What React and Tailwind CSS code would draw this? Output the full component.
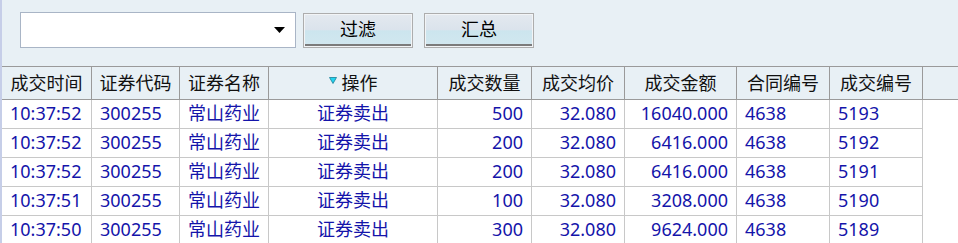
import React from 'react';

const columns = [
  { title: '成交时间', w: 'w-[90px]', align: 'text-left' },
  { title: '证券代码', w: 'w-[88px]', align: 'text-left' },
  { title: '证券名称', w: 'w-[89px]', align: 'text-left' },
  { title: '操作', w: 'w-[169px]', align: 'text-center', sorted: true },
  { title: '成交数量', w: 'w-[94px]', align: 'text-right' },
  { title: '成交均价', w: 'w-[93px]', align: 'text-right' },
  { title: '成交金额', w: 'w-[112px]', align: 'text-right' },
  { title: '合同编号', w: 'w-[93px]', align: 'text-left' },
  { title: '成交编号', w: 'w-[93px]', align: 'text-left' },
];

const rows = [
  ['10:37:52', '300255', '常山药业', '证券卖出', '500', '32.080', '16040.000', '4638', '5193'],
  ['10:37:52', '300255', '常山药业', '证券卖出', '200', '32.080', '6416.000', '4638', '5192'],
  ['10:37:52', '300255', '常山药业', '证券卖出', '200', '32.080', '6416.000', '4638', '5191'],
  ['10:37:51', '300255', '常山药业', '证券卖出', '100', '32.080', '3208.000', '4638', '5190'],
  ['10:37:50', '300255', '常山药业', '证券卖出', '300', '32.080', '9624.000', '4638', '5189'],
];

const SortArrow = () => (
  <svg width="8" height="7" viewBox="0 0 8 7" className="mr-[5px] mb-[6px]">
    <path d="M0.5 0.5 H7.5 L4 6.5 Z" fill="#22d4f0" stroke="#1c7f96" strokeWidth="0.8" />
  </svg>
);

const ToolButton = ({ label }) => (
  <button className="w-[110px] h-[35px] border border-[#adadad] bg-[#f2f4f6] p-px">
    <div className="h-full flex flex-col border-b-2 border-[#7b7b7b]">
      <div className="flex-1 flex items-center justify-center bg-[linear-gradient(to_bottom,#e3e9ef_0%,#dbe3ec_50%,#cce5ee_55%,#d1e7ef_100%)] text-[18px] text-black">
        {label}
      </div>
    </div>
  </button>
);

export default function App() {
  return (
    <div
      className="w-[958px] h-[243px] overflow-hidden flex bg-white"
      style={{ fontFamily: '"Noto Sans", "Noto Sans CJK SC", sans-serif' }}
    >
      <div className="w-[2px] shrink-0 bg-[#c6cee8]" />
      <div className="flex-1 flex flex-col">
        {/* toolbar */}
        <div className="h-[66px] shrink-0 bg-[#e8f0f5] flex items-start pl-[18px] pt-[12px] gap-[7px]">
          <div className="w-[276px] h-[36px] bg-white border border-[#a9b5c6] flex items-center justify-end pr-[10px]">
            <svg width="11" height="6" viewBox="0 0 11 6">
              <path d="M0 0 H11 L5.5 6 Z" fill="#000" />
            </svg>
          </div>
          <div className="mt-px flex gap-[11px]">
            <ToolButton label="过滤" />
            <ToolButton label="汇总" />
          </div>
        </div>

        {/* header */}
        <div className="h-[34px] shrink-0 flex bg-[#e8f0f5] border-y border-[#9a9a9a]">
          {columns.map((c) => (
            <div
              key={c.title}
              className={`${c.w} shrink-0 flex items-center justify-center border-r border-[#9a9a9a] text-[18px] text-[#111]`}
            >
              {c.sorted && <SortArrow />}
              {c.title}
            </div>
          ))}
        </div>

        {/* body */}
        <div className="flex flex-col">
          {rows.map((r, i) => (
            <div key={i} className="flex">
              <div className="flex border-b border-[#c8c8c8]">
                {r.map((v, j) => (
                  <div
                    key={j}
                    className={`${columns[j].w} ${columns[j].align} shrink-0 h-[28px] leading-[27px] px-[8px] border-r border-[#c8c8c8] text-[18px] text-[#1414aa] whitespace-nowrap`}
                  >
                    {v}
                  </div>
                ))}
              </div>
            </div>
          ))}
        </div>
      </div>
    </div>
  );
}
